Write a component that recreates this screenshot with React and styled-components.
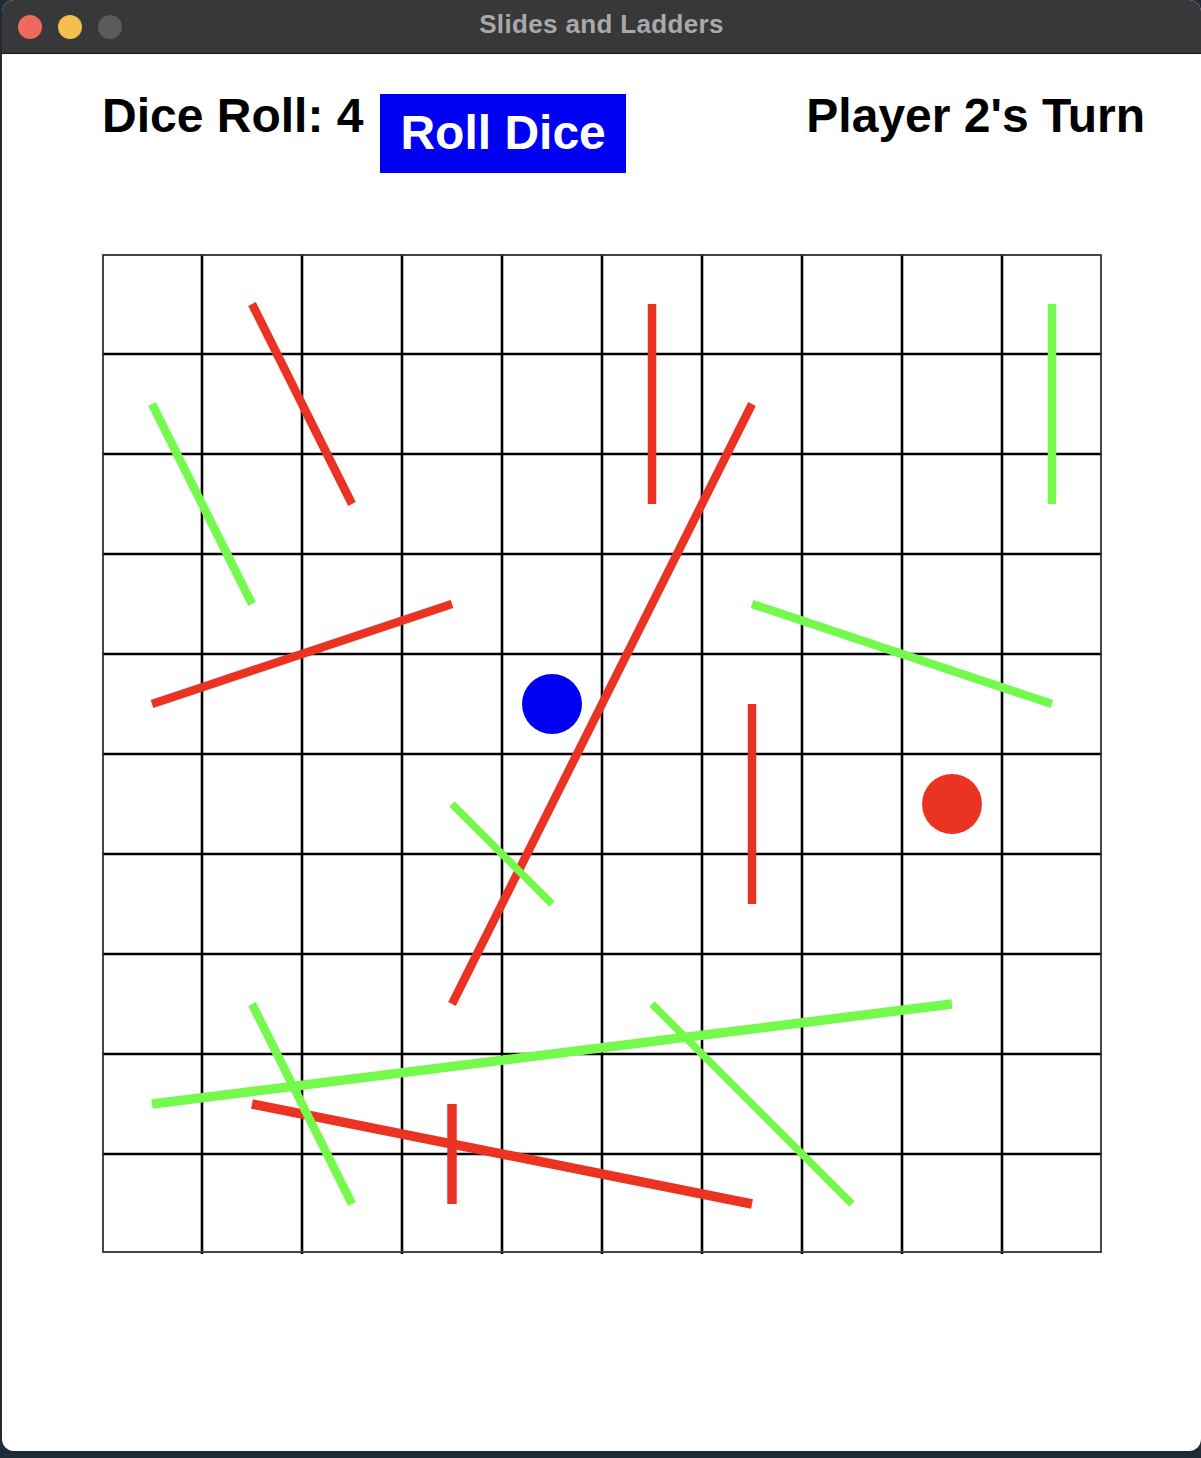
import React from 'react';
import styled, { createGlobalStyle } from 'styled-components';

const GlobalStyle = createGlobalStyle`
  body {
    margin: 0;
    background: #1d2c36;
    font-family: "Liberation Sans", Arial, Helvetica, sans-serif;
  }
`

const Window = styled.div`
  margin-left: 2px;
  width: 1199px;
  height: 1451px;
  background: #fff;
  border-radius: 12px;
  overflow: hidden;
  display: flex;
  flex-direction: column;
`

const TitleBar = styled.div`
  height: 53px;
  background: #38383a;
  border-bottom: 1px solid #151515;
  display: grid;
  grid-template-columns: 1fr auto 1fr;
  align-items: center;
`

const Lights = styled.div`
  display: flex;
  gap: 16px;
  padding-left: 16px;
`

const Light = styled.span`
  width: 24px;
  height: 24px;
  border-radius: 50%;
  background: ${p => p.color};
`

const Title = styled.div`
  color: #a9a9ab;
  font-weight: bold;
  font-size: 26px;
  letter-spacing: 0.35px;
  padding-bottom: 4px;
`

const Content = styled.div`
  padding: 38px 56px 0 100px;
`

const Header = styled.div`
  display: flex;
  justify-content: space-between;
  align-items: flex-start;
`

const LeftGroup = styled.div`
  display: flex;
  align-items: flex-start;
  gap: 17px;
`

const Label = styled.div`
  font-size: 48px;
  line-height: 48px;
  font-weight: bold;
  color: #000;
  white-space: nowrap;
`

const RollButton = styled.button`
  margin-top: 2px;
  height: 79px;
  padding: 15px 20px 16px 20px;
  background: #0000f5;
  border: none;
  color: #fff;
  font-family: inherit;
  font-size: 48px;
  line-height: 48px;
  font-weight: bold;
  cursor: pointer;
`

const Board = styled.svg`
  display: block;
  margin-top: 81px;
  width: 1000px;
  height: 1000px;
`

const RED = '#ea3323'
const GREEN = '#75f94c'
const BLUE = '#0000f5'

const snakes = [
  [150, 50, 250, 250, 8.5],
  [550, 50, 550, 250, 8.5],
  [650, 150, 350, 750, 8.5],
  [50, 450, 350, 350, 8.5],
  [650, 450, 650, 650, 8.5],
  [150, 850, 650, 950, 9.5],
  [350, 850, 350, 950, 9.5],
]

const ladders = [
  [50, 150, 150, 350, 8.5],
  [950, 50, 950, 250, 8.5],
  [650, 350, 950, 450, 8.5],
  [350, 550, 450, 650, 7.5],
  [150, 750, 250, 950, 8.5],
  [50, 850, 850, 750, 9.5],
  [550, 750, 750, 950, 7.5],
]

const gridLines = [1, 2, 3, 4, 5, 6, 7, 8, 9]

const App = () => (
  <>
    <GlobalStyle />
    <Window>
      <TitleBar>
        <Lights>
          <Light color="#ee6a5f" />
          <Light color="#f5be4f" />
          <Light color="#5b5b5d" />
        </Lights>
        <Title>Slides and Ladders</Title>
        <div />
      </TitleBar>
      <Content>
        <Header>
          <LeftGroup>
            <Label>Dice Roll: 4</Label>
            <RollButton>Roll Dice</RollButton>
          </LeftGroup>
          <Label>Player 2's Turn</Label>
        </Header>
        <Board viewBox="0 0 1000 1000">
          {gridLines.map(i => (
            <g key={i}>
              <line x1={i * 100} y1={0} x2={i * 100} y2={1000} stroke="#000" strokeWidth="2.6" />
              <line x1={0} y1={i * 100} x2={1000} y2={i * 100} stroke="#000" strokeWidth="2.6" />
            </g>
          ))}
          <rect x="1" y="1" width="998" height="997" fill="none" stroke="#333" strokeWidth="1.8" />
          {snakes.map(([x1, y1, x2, y2, w], i) => (
            <line key={'s' + i} x1={x1} y1={y1} x2={x2} y2={y2} stroke={RED} strokeWidth={w} />
          ))}
          {ladders.map(([x1, y1, x2, y2, w], i) => (
            <line key={'l' + i} x1={x1} y1={y1} x2={x2} y2={y2} stroke={GREEN} strokeWidth={w} />
          ))}
          <circle cx="450" cy="450" r="30" fill={BLUE} />
          <circle cx="850" cy="550" r="30" fill={RED} />
        </Board>
      </Content>
    </Window>
  </>
)

export default App;
